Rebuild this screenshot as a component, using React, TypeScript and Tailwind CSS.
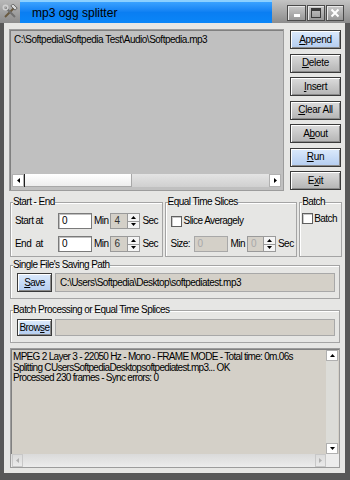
import React from "react";

function Tri({ up, color = "#000" }: { up?: boolean; color?: string }) {
  return (
    <svg width="5" height="3" viewBox="0 0 5 3">
      <polygon points={up ? "0,3 5,3 2.5,0" : "0,0 5,0 2.5,3"} fill={color} />
    </svg>
  );
}

function SideTri({ right, color = "#000" }: { right?: boolean; color?: string }) {
  return (
    <svg width="3" height="5" viewBox="0 0 3 5">
      <polygon points={right ? "0,0 0,5 3,2.5" : "3,0 3,5 0,2.5"} fill={color} />
    </svg>
  );
}

function Btn({ label, u, blue, className = "" }: { label: string; u: number; blue?: boolean; className?: string }) {
  return (
    <div
      className={`flex items-center justify-center border border-[#3a3a3a] shadow-[inset_1px_1px_0_#ffffff,inset_-1px_-1px_0_#8a8a8a] ${
        blue ? "bg-linear-to-b from-[#dceafc] to-[#b4cdf0]" : "bg-linear-to-b from-[#dcdcdc] to-[#b4b4b4]"
      } ${className}`}
    >
      <span>
        {label.slice(0, u)}
        <span className="underline underline-offset-1">{label[u]}</span>
        {label.slice(u + 1)}
      </span>
    </div>
  );
}

function Spin({ value, className = "" }: { value: string; className?: string }) {
  return (
    <div className={`flex h-[16px] ${className}`}>
      <div className="flex flex-1 items-center border border-[#9a9a9a] bg-[#d4d0c8] pl-[3px]">{value}</div>
      <div className="flex w-[12px] flex-col border border-l-0 border-[#9a9a9a]">
        <div className="flex flex-1 items-center justify-center border-b border-[#9a9a9a] bg-[#f4f4f4]">
          <Tri up />
        </div>
        <div className="flex flex-1 items-center justify-center bg-[#f4f4f4]">
          <Tri />
        </div>
      </div>
    </div>
  );
}

function Check() {
  return <div className="h-[11px] w-[11px] shrink-0 border border-[#606060] bg-white shadow-[inset_1px_1px_0_#c8c8c8]" />;
}

function Group({ title, className, children }: { title: string; className: string; children: React.ReactNode }) {
  return (
    <fieldset className={`border border-[#a4a4a4] shadow-[inset_1px_1px_0_#ffffff] ${className}`}>
      <legend className="ml-[2px] leading-[12px]">{title}</legend>
      {children}
    </fieldset>
  );
}

function TitleBar() {
  return (
    <div className="flex h-[23px]">
      <div className="flex w-[20px] items-center justify-center bg-linear-to-b from-[#b8b8b8] to-[#8c8c8c]">
        <svg width="16" height="16" viewBox="0 0 16 16">
          <line x1="3" y1="13" x2="12" y2="4" stroke="#6a5a40" strokeWidth="2" />
          <line x1="4" y1="4" x2="13" y2="13" stroke="#707070" strokeWidth="2" />
          <rect x="9" y="1.5" width="6" height="3" fill="#d8d8d8" stroke="#404040" strokeWidth="0.7" transform="rotate(45 12 3)" />
          <circle cx="3.5" cy="3.5" r="2.3" fill="none" stroke="#d0d0d0" strokeWidth="1.4" />
        </svg>
      </div>
      <div className="flex w-[252px] items-center border-t-2 border-[#8cd0ff] bg-linear-to-b from-[#3aa2ff] via-[#0a7ef2] to-[#0a86f8] pl-[12px] text-[12px] tracking-[0px]">
        mp3 ogg splitter
      </div>
      <div className="flex flex-1 gap-[1px] bg-linear-to-b from-[#c4c4c4] to-[#8c8c8c] pl-[15px] pt-[5px]">
        <div className="flex h-[16px] w-[19px] items-end justify-center border border-[#4a4a4a] bg-linear-to-b from-[#c8c8c8] to-[#989898] pb-[3px] shadow-[inset_1px_1px_0_#e8e8e8]">
          <div className="h-[3px] w-[6px] bg-white" />
        </div>
        <div className="flex h-[16px] w-[18px] items-center justify-center border border-[#4a4a4a] bg-linear-to-b from-[#c8c8c8] to-[#989898] shadow-[inset_1px_1px_0_#e8e8e8]">
          <div className="h-[10px] w-[10px] border border-t-[3px] border-[#3a3a3a]" />
        </div>
        <div className="flex h-[16px] w-[18px] items-center justify-center border border-[#4a4a4a] bg-linear-to-b from-[#c8c8c8] to-[#989898] shadow-[inset_1px_1px_0_#e8e8e8]">
          <svg width="10" height="10" viewBox="0 0 10 10">
            <path d="M1.5 1.5 L8.5 8.5 M8.5 1.5 L1.5 8.5" stroke="#ffffff" strokeWidth="2" />
          </svg>
        </div>
      </div>
    </div>
  );
}

export default function App() {
  return (
    <div className="flex h-[480px] w-[350px] flex-col overflow-hidden bg-[#585858] font-['Liberation_Sans',Arial,sans-serif] text-[10px] leading-none tracking-[-0.55px] text-black">
      <TitleBar />
      <div className="mb-[7px] ml-[4px] mr-[5px] flex flex-1 flex-col bg-[#e6e6e4] pl-[5px] pr-[3px] pt-[6px]">
        {/* file list + buttons */}
        <div className="flex h-[162px]">
          <div className="flex w-[275px] flex-col border border-[#9c9c9c] bg-[#c0c0c0] p-[2px] shadow-[inset_1px_1px_0_#808080]">
            <div className="flex-1 pl-[2px] pt-[3px] tracking-[-0.5px]">C:\Softpedia\Softpedia Test\Audio\Softpedia.mp3</div>
            <div className="mb-[1px] flex h-[13px] bg-linear-to-b from-[#e4e4e4] to-[#d0d0d0]">
              <div className="flex w-[12px] items-center justify-center border border-[#b0b0b0] bg-white">
                <SideTri />
              </div>
              <div className="w-[108px] border-l border-[#202020] bg-linear-to-b from-white to-[#ececec] shadow-[inset_-1px_-1px_0_#a8a8a8]" />
              <div className="flex-1" />
              <div className="flex w-[12px] items-center justify-center border border-[#b0b0b0] bg-white">
                <SideTri right />
              </div>
            </div>
          </div>
          <div className="ml-[6px] flex w-[51px] flex-col justify-between py-[1px] tracking-[-0.3px]">
            <Btn label="Append" u={0} blue className="h-[19px]" />
            <Btn label="Delete" u={0} className="h-[19px]" />
            <Btn label="Insert" u={0} className="h-[19px]" />
            <Btn label="Clear All" u={0} className="h-[19px]" />
            <Btn label="About" u={1} className="h-[19px]" />
            <Btn label="Run" u={0} blue className="h-[19px]" />
            <Btn label="Exit" u={1} className="h-[19px]" />
          </div>
        </div>

        {/* options row */}
        <div className="mt-[5px] flex h-[61px]">
          <Group title="Start - End" className="ml-[1px] w-[153px]">
            <div className="flex flex-col gap-[7px] pl-[4px] pt-[5px]">
              <div className="flex h-[16px] items-center">
                <span className="w-[43px]">Start at</span>
                <div className="flex h-[16px] w-[34px] items-center border border-[#7a7a7a] bg-white pl-[3px] shadow-[inset_1px_1px_0_#c0c0c0]">0</div>
                <span className="ml-[2px]">Min</span>
                <Spin value="4" className="ml-[2px] w-[30px] text-[#303030]" />
                <span className="ml-[2px]">Sec</span>
              </div>
              <div className="flex h-[16px] items-center">
                <span className="w-[43px] whitespace-pre">End  at</span>
                <div className="flex h-[16px] w-[34px] items-center border border-[#7a7a7a] bg-white pl-[3px] shadow-[inset_1px_1px_0_#c0c0c0]">0</div>
                <span className="ml-[2px]">Min</span>
                <Spin value="6" className="ml-[2px] w-[30px] text-[#303030]" />
                <span className="ml-[2px]">Sec</span>
              </div>
            </div>
          </Group>
          <Group title="Equal Time Slices" className="ml-[2px] w-[133px]">
            <div className="flex flex-col gap-[7px] pl-[5px] pt-[5px]">
              <div className="flex h-[16px] items-center">
                <Check />
                <span className="ml-[2px]">Slice Averagely</span>
              </div>
              <div className="flex h-[16px] items-center">
                <span className="w-[23px]">Size:</span>
                <div className="flex h-[16px] w-[34px] items-center border border-[#a8a8a8] bg-[#d4d0c8] pl-[3px] text-[#a8a8a8]">0</div>
                <span className="ml-[3px]">Min</span>
                <Spin value="0" className="ml-[2px] w-[29px] text-[#a8a8a8]" />
                <span className="ml-[2px]">Sec</span>
              </div>
            </div>
          </Group>
          <Group title="Batch" className="ml-[2px] w-[43px]">
            <div className="flex h-[16px] items-center pl-[2px] pt-[5px]">
              <Check />
              <span className="ml-[1px]">Batch</span>
            </div>
          </Group>
        </div>

        {/* save path */}
        <Group title="Single File's Saving Path" className="ml-[1px] mt-[2px] h-[40px] w-[330px]">
          <div className="flex pl-[6px] pt-[2px]">
            <Btn label="Save" u={0} blue className="h-[19px] w-[35px]" />
            <div className="ml-[3px] flex h-[19px] w-[280px] items-center border border-[#a8a8a8] bg-[#d4d0c8] pl-[4px]">
              C:\Users\Softpedia\Desktop\softpediatest.mp3
            </div>
          </div>
        </Group>

        {/* batch path */}
        <Group title="Batch Processing or Equal Time Splices" className="ml-[1px] mt-[5px] h-[39px] w-[330px]">
          <div className="flex pl-[6px] pt-[3px]">
            <Btn label="Browse" u={4} blue className="h-[17px] w-[35px]" />
            <div className="ml-[3px] h-[17px] w-[280px] border border-[#a8a8a8] bg-[#d4d0c8]" />
          </div>
        </Group>

        {/* log */}
        <div className="ml-[1px] mt-[5px] flex h-[120px] w-[330px] flex-col border border-[#9c9c9c] bg-[#d4d0c8] shadow-[inset_1px_1px_0_#808080]">
          <div className="flex flex-1">
            <div className="flex-1 pl-[2px] pt-[3px] leading-[10.5px] tracking-[-0.7px]">
              <div>MPEG 2 Layer 3 - 22050 Hz - Mono - FRAME MODE - Total time: 0m.06s</div>
              <div>Splitting CUsersSoftpediaDesktopsoftpediatest.mp3... OK</div>
              <div>Processed 230 frames - Sync errors: 0</div>
            </div>
            <div className="mr-[1px] mt-[1px] flex w-[12px] flex-col justify-between bg-[#dcdcd8]">
              <div className="flex h-[11px] items-center justify-center border border-[#b0b0b0] bg-white">
                <Tri up />
              </div>
              <div className="flex h-[11px] items-center justify-center border border-[#b0b0b0] bg-white">
                <Tri />
              </div>
            </div>
          </div>
          <div className="flex h-[13px]">
            <div className="flex flex-1 bg-linear-to-b from-[#dadada] to-[#ececec] pl-[1px]">
              <div className="flex w-[11px] items-center justify-center border border-[#c8c8c8]">
                <SideTri color="#b0b0b0" />
              </div>
              <div className="flex-1" />
              <div className="flex w-[11px] items-center justify-center border border-[#c8c8c8]">
                <SideTri right color="#b0b0b0" />
              </div>
            </div>
            <div className="w-[13px] bg-[#ececec]" />
          </div>
        </div>
      </div>
    </div>
  );
}
